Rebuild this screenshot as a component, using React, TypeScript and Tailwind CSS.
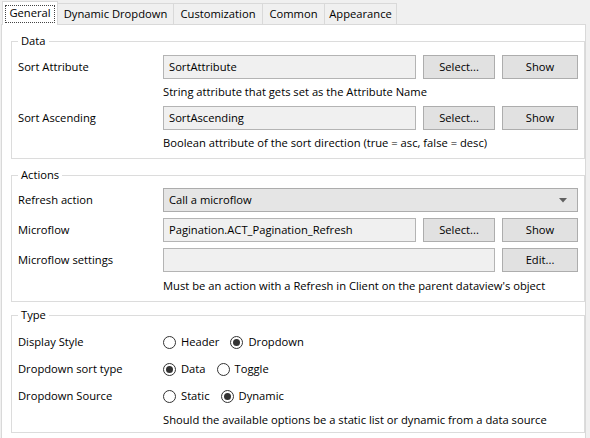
import React from "react";

const inputCls =
  "h-[24px] border border-[#b4b4b4] bg-[#f0f0f0] flex items-center pl-[5px] text-black truncate";
const btnCls =
  "h-[24px] border border-[#adadad] bg-[#e1e1e1] flex items-center justify-center text-black";

function Group({ title, className, children }: { title: string; className?: string; children: React.ReactNode }) {
  return (
    <div className={"relative ml-[9px] w-[574px] border border-[#dcdcdc] pl-[6px] pr-[5px] " + (className ?? "")}>
      <span className="absolute left-[6px] top-[-9px] bg-white px-[3px] leading-[16px]">{title}</span>
      {children}
    </div>
  );
}

function Label({ children }: { children: React.ReactNode }) {
  return <div className="w-[145px] shrink-0">{children}</div>;
}

function Radio({ checked, label }: { checked: boolean; label: string }) {
  return (
    <div className="flex items-center gap-[5px] mr-[11px]">
      <span className="w-[13px] h-[13px] rounded-full border border-[#333333] bg-white flex items-center justify-center">
        {checked && <span className="w-[7px] h-[7px] rounded-full bg-[#333333]" />}
      </span>
      <span>{label}</span>
    </div>
  );
}

function AttrRow({ label, value, help }: { label: string; value: string; help: string }) {
  return (
    <>
      <div className="flex items-center h-[24px]">
        <Label>{label}</Label>
        <div className={inputCls + " w-[253px]"}>{value}</div>
        <div className={btnCls + " w-[72px] ml-[7px]"}>Select...</div>
        <div className={btnCls + " w-[76px] ml-[7px]"}>Show</div>
      </div>
      <div className="h-[27px] flex items-center pl-[145px]">{help}</div>
    </>
  );
}

export default function App() {
  const tabs = ["General", "Dynamic Dropdown", "Customization", "Common", "Appearance"];
  const widths = ["w-[56px]", "w-[116px]", "w-[89px]", "w-[62px]", "w-[72px]"];
  return (
    <div className="w-[590px] h-[438px] overflow-hidden bg-[#f0f0f0] text-[11.2px] text-black font-['Open_Sans','Noto_Sans',sans-serif]">
      <div className="flex items-end h-[24px] pl-[2px]">
        {tabs.map((t, i) =>
          i === 0 ? (
            <div
              key={t}
              className={widths[i] + " relative z-10 h-[24px] mb-[-1px] bg-white border border-b-0 border-[#d9d9d9] flex items-center justify-center"}
            >
              <span className="border border-dotted border-[#444] px-[3px] h-[18px] flex items-center">{t}</span>
            </div>
          ) : (
            <div
              key={t}
              className={widths[i] + " h-[21px] bg-[#f0f0f0] border border-b-0 border-l-0 border-[#d9d9d9] flex items-center justify-center"}
            >
              {t}
            </div>
          )
        )}
      </div>
      <div className="ml-[1px] w-[585px] h-[420px] bg-white border border-[#d9d9d9] pt-[16px]">
        <Group title="Data" className="pt-[13px] pb-[1px]">
          <AttrRow label="Sort Attribute" value="SortAttribute" help="String attribute that gets set as the Attribute Name" />
          <AttrRow label="Sort Ascending" value="SortAscending" help="Boolean attribute of the sort direction (true = asc, false = desc)" />
        </Group>

        <Group title="Actions" className="mt-[16px] pt-[12px] pb-[1px] flex flex-col gap-[6px]">
          <div className="flex items-center h-[24px]">
            <Label>Refresh action</Label>
            <div className="h-[24px] w-[415px] border border-[#acacac] bg-[#e5e5e5] flex items-center pl-[5px] pr-[10px] justify-between">
              <span>Call a microflow</span>
              <svg width="8" height="5" viewBox="0 0 8 5">
                <path d="M0 0 L8 0 L4 4.5 Z" fill="#606060" />
              </svg>
            </div>
          </div>
          <div className="flex items-center h-[24px]">
            <Label>Microflow</Label>
            <div className={inputCls + " w-[253px]"}>Pagination.ACT_Pagination_Refresh</div>
            <div className={btnCls + " w-[72px] ml-[7px]"}>Select...</div>
            <div className={btnCls + " w-[76px] ml-[7px]"}>Show</div>
          </div>
          <div className="flex items-center h-[24px]">
            <Label>Microflow settings</Label>
            <div className={inputCls + " w-[332px]"}></div>
            <div className={btnCls + " w-[76px] ml-[7px]"}>Edit...</div>
          </div>
          <div className="h-[28px] mt-[-6px] flex items-center pl-[145px]">
            Must be an action with a Refresh in Client on the parent dataview's object
          </div>
        </Group>

        <Group title="Type" className="mt-[13px] pt-[13px] pb-[2px]">
          <div className="flex items-center h-[27px]">
            <Label>Display Style</Label>
            <Radio checked={false} label="Header" />
            <Radio checked={true} label="Dropdown" />
          </div>
          <div className="flex items-center h-[27px]">
            <Label>Dropdown sort type</Label>
            <Radio checked={true} label="Data" />
            <Radio checked={false} label="Toggle" />
          </div>
          <div className="flex items-center h-[27px]">
            <Label>Dropdown Source</Label>
            <Radio checked={false} label="Static" />
            <Radio checked={true} label="Dynamic" />
          </div>
          <div className="h-[20px] flex items-center pl-[145px]">
            Should the available options be a static list or dynamic from a data source
          </div>
        </Group>
      </div>
    </div>
  );
}
